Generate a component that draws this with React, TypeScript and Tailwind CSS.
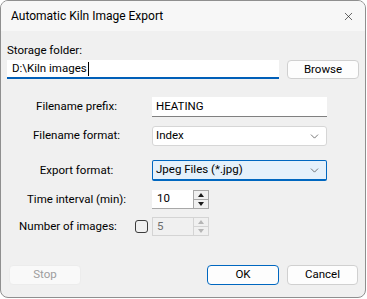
import { ChevronDown, X } from 'lucide-react';

const font = { fontFamily: 'Roboto, "Liberation Sans", sans-serif' };

function SpinButtons({ disabled }: { disabled?: boolean }) {
  const edge = disabled ? 'border-[#d4d4d4]' : 'border-[#a8a8a8]';
  return (
    <div className={`flex w-[16px] flex-col border ${edge} bg-[#f0f0f0]`}>
      <div className={`flex flex-1 items-center justify-center border-b ${edge}`}>
        <div
          className={`h-0 w-0 border-x-[3.5px] border-b-[4px] border-x-transparent ${disabled ? 'border-b-[#b5b5b5]' : 'border-b-[#1a1a1a]'}`}
        />
      </div>
      <div className="flex flex-1 items-center justify-center">
        <div
          className={`h-0 w-0 border-x-[3.5px] border-t-[4px] border-x-transparent ${disabled ? 'border-t-[#b5b5b5]' : 'border-t-[#1a1a1a]'}`}
        />
      </div>
    </div>
  );
}

export default function App() {
  return (
    <div className="h-[299px] w-[367px] bg-white text-[11.5px] text-black" style={font}>
      <div className="flex h-[298px] w-[366px] flex-col overflow-hidden rounded-[8px] border border-[#8f8f8f] bg-[#f0f0f0]">
        {/* Title bar */}
        <div className="flex h-[30px] shrink-0 items-center justify-between bg-[#f7f7f7] pl-[10px] pr-[8px]">
          <span className="text-[12px] leading-none">Automatic Kiln Image Export</span>
          <X size={13} strokeWidth={1.2} className="mr-[2px] text-[#1a1a1a]" />
        </div>

        {/* Storage folder */}
        <div className="ml-[6px] mt-[11px] h-[16px] leading-[16px]">Storage folder:</div>
        <div className="mt-[2px] flex h-[19px] items-stretch">
          <div className="ml-[6px] flex w-[272px] items-center border-b-2 border-[#005fb8] bg-white pl-[5px]">
            <span>D:\Kiln images</span>
            <span className="ml-[1px] h-[14px] w-px bg-black" />
          </div>
          <button className="ml-[8px] w-[72px] rounded-[4px] border border-[#d0d0d0] bg-[#fdfdfd]">
            Browse
          </button>
        </div>

        {/* Filename prefix */}
        <div className="mt-[18px] flex h-[20px] items-stretch">
          <div className="flex w-[151px] items-center justify-center">Filename prefix:</div>
          <div className="flex w-[175px] items-center border-b border-[#808080] bg-white pl-[4px]">HEATING</div>
        </div>

        {/* Filename format */}
        <div className="mt-[9px] flex h-[20px] items-stretch">
          <div className="flex w-[151px] items-center justify-center">Filename format:</div>
          <div className="flex w-[175px] items-center justify-between rounded-[3px] border border-[#d6d6d6] bg-white pl-[3px] pr-[5px]">
            <span>Index</span>
            <ChevronDown size={13} strokeWidth={1.3} className="text-[#404040]" />
          </div>
        </div>

        {/* Export format */}
        <div className="mt-[14px] flex h-[21px] items-stretch">
          <div className="flex w-[151px] items-center justify-center">Export format:</div>
          <div className="flex w-[175px] items-center justify-between rounded-[2px] border border-b-2 border-[#0067c0] bg-[#e5f1fb] pl-[3px] pr-[5px]">
            <span>Jpeg Files (*.jpg)</span>
            <ChevronDown size={13} strokeWidth={1.3} className="text-[#404040]" />
          </div>
        </div>

        {/* Time interval */}
        <div className="mt-[9px] flex h-[19px] items-stretch">
          <div className="flex w-[151px] items-center justify-center">Time interval (min):</div>
          <div className="flex w-[41px] items-center border-b border-[#a8a8a8] bg-white pl-[5px]">10</div>
          <SpinButtons />
        </div>

        {/* Number of images */}
        <div className="mt-[8px] flex h-[19px] items-stretch">
          <div className="flex w-[134px] items-center justify-center">Number of images:</div>
          <div className="flex w-[17px] items-center">
            <div className="h-[13px] w-[13px] rounded-[3px] border border-[#3c3c3c]" />
          </div>
          <div className="flex w-[41px] items-center border border-r-0 border-[#d4d4d4] bg-[#f0f0f0] pl-[4px] text-[#6d6d6d]">5</div>
          <SpinButtons disabled />
        </div>

        {/* Buttons */}
        <div className="mt-[29px] flex h-[20px] items-stretch">
          <button className="ml-[8px] w-[72px] rounded-[4px] border border-[#ececec] bg-[#f9f9f9] text-[#9d9d9d]">
            Stop
          </button>
          <button className="ml-[126px] w-[72px] rounded-[4px] border border-[#0067c0] bg-[#fdfdfd]">
            OK
          </button>
          <button className="ml-[8px] w-[71px] rounded-[4px] border border-[#d0d0d0] bg-[#fdfdfd]">
            Cancel
          </button>
        </div>
      </div>
    </div>
  );
}
